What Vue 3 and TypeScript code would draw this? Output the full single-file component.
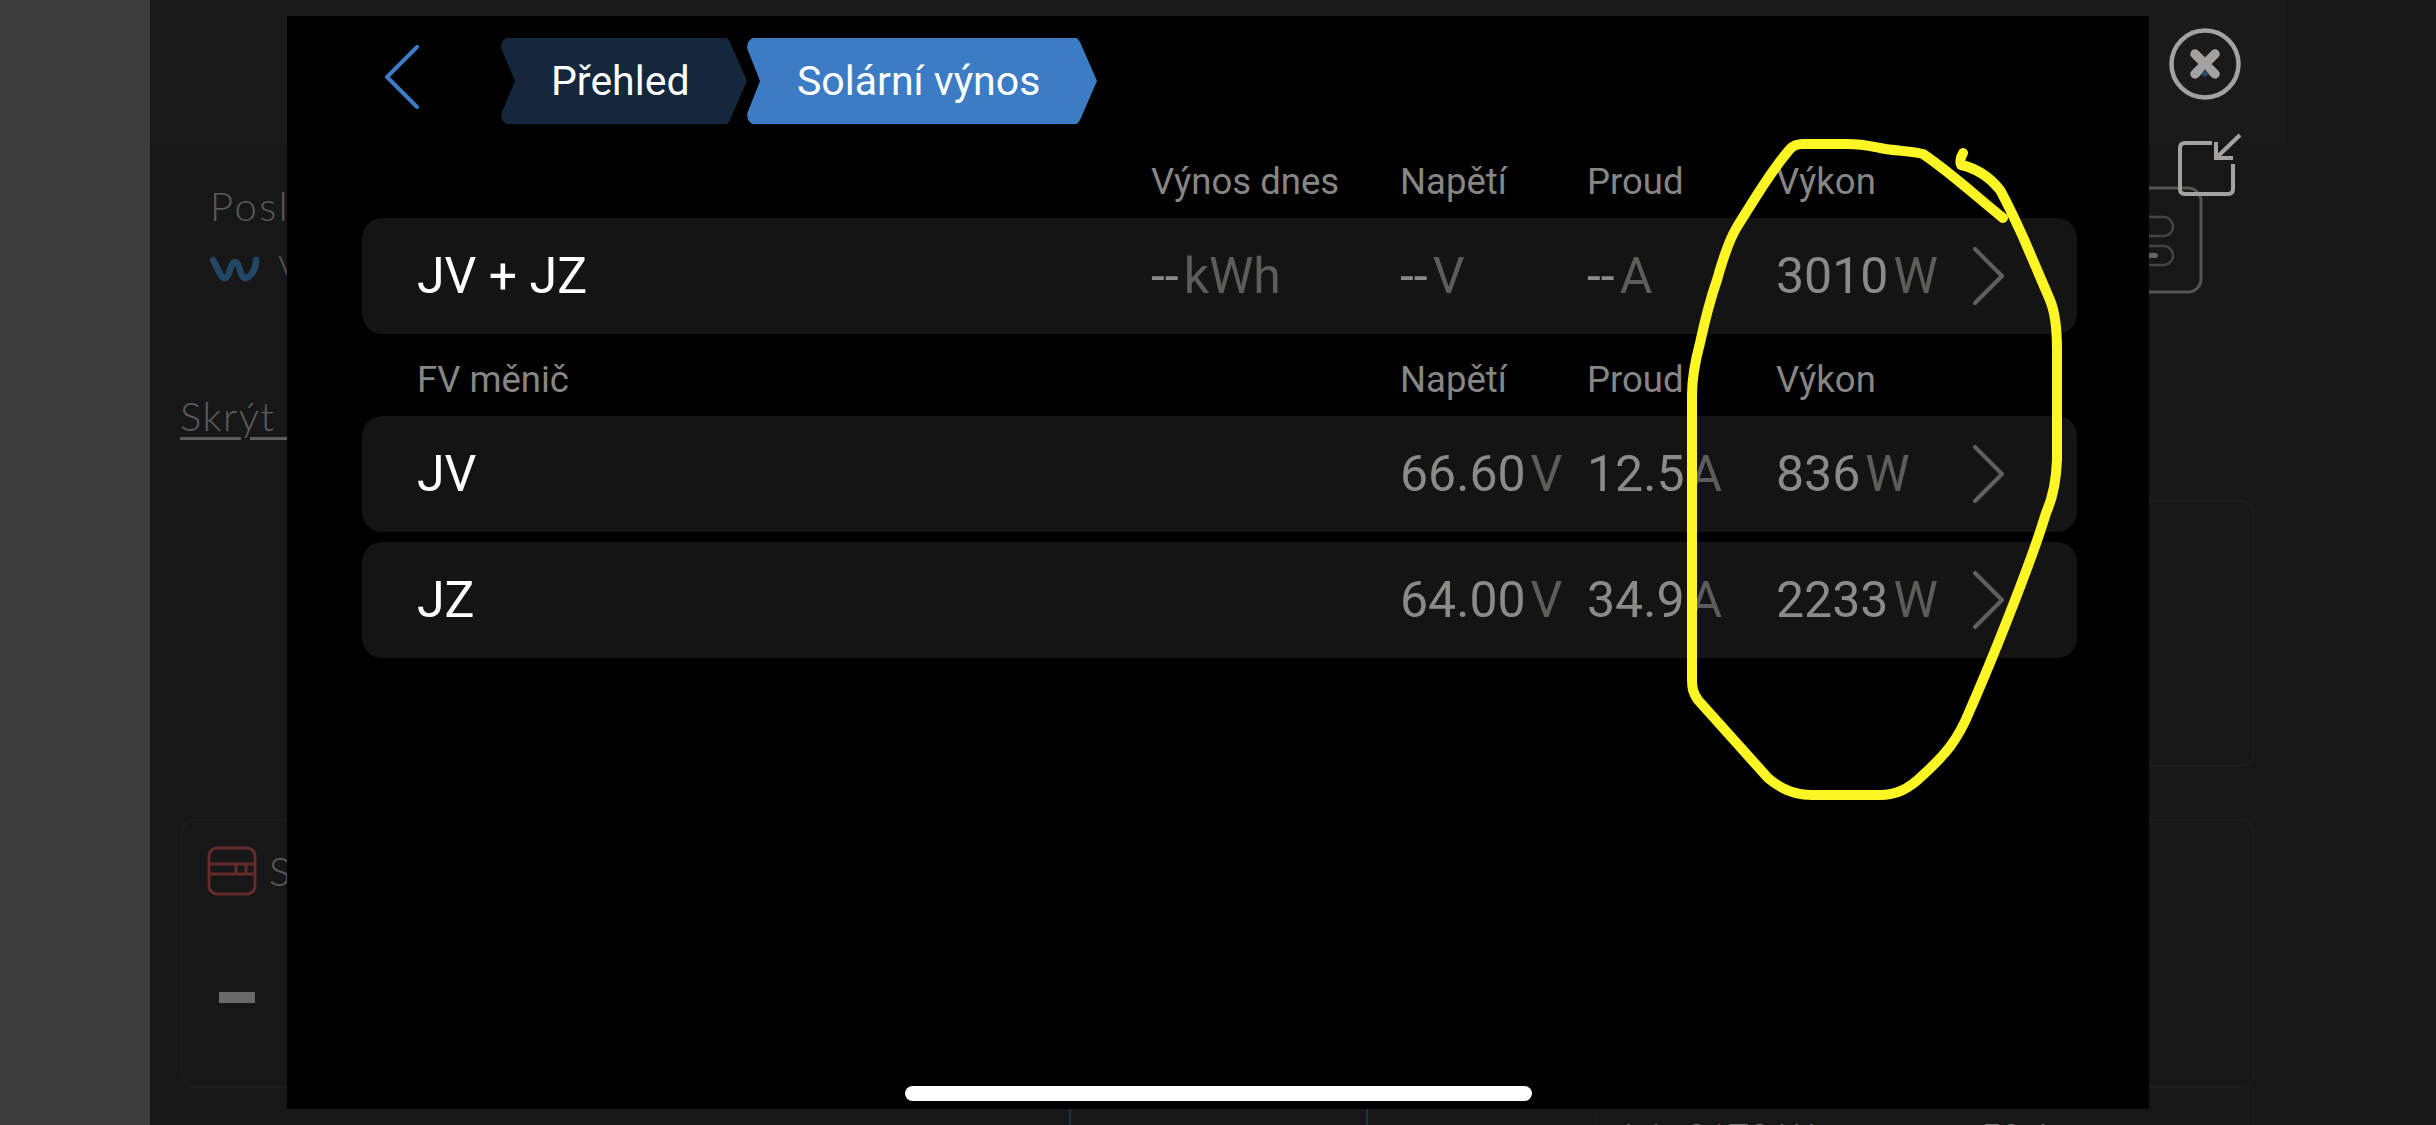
<script setup lang="ts">
interface Row {
  name: string
  yieldToday?: string
  voltage: string
  current: string
  power: string
}
const total: Row = { name: 'JV + JZ', yieldToday: '--', voltage: '--', current: '--', power: '3010' }
const chargers: Row[] = [
  { name: 'JV', voltage: '66.60', current: '12.5', power: '836' },
  { name: 'JZ', voltage: '64.00', current: '34.9', power: '2233' },
]
const scribble =
  'M1963 153 C1960 158 1960 162 1961 165 C1975 168 1988 175 2000 190 C2008 204 2016 222 2023 237 ' +
  'L2050 300 C2055 312 2057 325 2057 350 L2057 460 C2056 485 2052 500 2046 513 ' +
  'C2032 560 1992 660 1970 710 C1958 740 1945 755 1923 775 ' +
  'C1908 790 1895 795 1880 795 L1812 795 C1795 795 1782 790 1768 778 L1698 700 C1693 693 1692 688 1692 680 ' +
  'L1692 395 C1692 375 1696 358 1700 343 C1705 320 1710 300 1717 280 C1722 262 1729 240 1737 227 ' +
  'C1755 198 1772 170 1790 149 C1794 145 1797 144 1803 144 L1847 144 C1862 144 1870 146 1880 148 ' +
  'C1895 151 1912 151 1923 154 C1950 172 1978 198 2003 218'
</script>

<template>
  <div class="screen">
    <div class="side"></div>

    <div class="page">
      <div class="band">
        <svg class="close" width="74" height="74" viewBox="0 0 74 74" fill="none">
          <circle cx="37" cy="37" r="33.5" stroke="#a3a2a0" stroke-width="4.5" />
          <path d="M27 27 L47 47 M47 27 L27 47" stroke="#a3a2a0" stroke-width="9.5" stroke-linecap="round" />
          <path d="M33 47 L37 42 L41 47 L37 50 Z" fill="#254a6e" />
        </svg>
        <svg class="shrink" width="64" height="64" viewBox="0 0 64 64" fill="none" stroke="#a3a2a0" stroke-width="4">
          <path d="M34 10 H7 Q2 10 2 15 V56 Q2 61 7 61 H50 Q55 61 55 56 V31" />
          <path d="M62 2 L38 25 M38 9 V25 H55" />
        </svg>
      </div>

      <div class="info">
        <div class="info-text">
          <div class="posl">Posle</div>
          <div class="brand">
            <svg width="50" height="26" viewBox="0 0 50 26" fill="none">
              <path d="M3 4 C8 12 10 22 15 22 C20 22 20 6 25 6 C30 6 30 22 35 22 C40 22 46 14 46 4" stroke="#224766" stroke-width="6.5" stroke-linecap="round" />
            </svg>
            <span class="brand-name">V</span>
          </div>
          <div class="hide-link">Skrýt&nbsp;&nbsp;&nbsp;&nbsp;</div>
        </div>
        <svg class="device" width="122" height="108" viewBox="0 0 122 108" fill="none" stroke="#555553" stroke-width="3">
          <rect x="2" y="2" width="118" height="104" rx="13" />
          <rect x="-30" y="31" width="122" height="19" rx="9.5" stroke="#444443" stroke-width="2.5" />
          <rect x="-30" y="60" width="122" height="19" rx="9.5" stroke="#444443" stroke-width="2.5" />
          <rect x="67" y="67" width="10" height="5" rx="2.5" fill="#666664" stroke="none" />
        </svg>
      </div>

      <div class="card card-top"></div>

      <div class="card card-main">
        <div class="card-head">
          <svg width="50" height="50" viewBox="0 0 50 50" fill="none" stroke="#662b2b" stroke-width="3">
            <rect x="2" y="2" width="46" height="46" rx="8" />
            <path d="M2 18 H48 M2 28 H48 M29 18 V28 M39 18 V28" />
          </svg>
          <span class="card-title">S</span>
        </div>
        <div class="dash"></div>
      </div>

      <div class="foot">
        <div class="foot-lines"></div>
        <div class="foot-panel">
          <span class="foot-label">L1</span>
          <span>3173 W</span>
          <span>50 A</span>
        </div>
      </div>
    </div>

    <div class="modal">
      <div class="nav">
        <svg class="back" width="36" height="64" viewBox="0 0 36 64" fill="none">
          <path d="M33 2 L3 32 L33 62" stroke="#3b7cc5" stroke-width="4" stroke-linecap="round" stroke-linejoin="round" />
        </svg>
        <div class="crumb crumb-dark">Přehled</div>
        <div class="crumb crumb-active">Solární výnos</div>
      </div>

      <div class="cols head head-first">
        <span></span>
        <span>Výnos dnes</span>
        <span>Napětí</span>
        <span>Proud</span>
        <span>Výkon</span>
      </div>
      <div class="cols row">
        <span class="name">{{ total.name }}</span>
        <span class="val"><b>{{ total.yieldToday }}</b><i>kWh</i></span>
        <span class="val"><b>{{ total.voltage }}</b><i>V</i></span>
        <span class="val"><b>{{ total.current }}</b><i>A</i></span>
        <span class="val"><b>{{ total.power }}</b><i>W</i></span>
        <svg width="32" height="58" viewBox="0 0 32 58" fill="none">
          <path d="M2 2 L29 29 L2 56" stroke="#60605e" stroke-width="4" stroke-linecap="round" stroke-linejoin="round" />
        </svg>
      </div>

      <div class="cols head head-second">
        <span>FV měnič</span>
        <span></span>
        <span>Napětí</span>
        <span>Proud</span>
        <span>Výkon</span>
      </div>
      <div class="list">
        <div v-for="c in chargers" :key="c.name" class="cols row">
          <span class="name">{{ c.name }}</span>
          <span></span>
          <span class="val"><b>{{ c.voltage }}</b><i>V</i></span>
          <span class="val"><b>{{ c.current }}</b><i>A</i></span>
          <span class="val"><b>{{ c.power }}</b><i>W</i></span>
          <svg width="32" height="58" viewBox="0 0 32 58" fill="none">
            <path d="M2 2 L29 29 L2 56" stroke="#60605e" stroke-width="4" stroke-linecap="round" stroke-linejoin="round" />
          </svg>
        </div>
      </div>

      <div class="home-bar"></div>
    </div>

    <svg class="scribble" width="2436" height="1125" viewBox="0 0 2436 1125" fill="none">
      <path :d="scribble" stroke="#fdf625" stroke-width="10" stroke-linecap="round" stroke-linejoin="round" />
    </svg>
  </div>
</template>

<style scoped>
.screen {
  position: relative;
  display: flex;
  width: 2436px;
  height: 1125px;
  overflow: hidden;
  background: #171717;
  font-family: Roboto, "Liberation Sans", sans-serif;
}
.side {
  width: 150px;
  flex: none;
  background: #3d3d3d;
}
.page {
  flex: 1;
  min-width: 0;
  font-family: Lato, "Liberation Sans", sans-serif;
  font-weight: 300;
  color: #5a5a5a;
}
.band {
  position: relative;
  box-sizing: border-box;
  height: 144px;
  width: 2136px;
  padding: 27px 44px 0 0;
  display: flex;
  justify-content: flex-end;
  align-items: flex-start;
  background: #1a1a1a;
}
.shrink {
  position: absolute;
  left: 2028px;
  top: 133px;
  z-index: 1;
}
.info {
  box-sizing: border-box;
  height: 356px;
  padding: 39px 233px 0 30px;
  display: flex;
  justify-content: space-between;
  align-items: flex-start;
}
.device {
  margin-top: 3px;
}
.info-text {
  display: flex;
  flex-direction: column;
}
.posl {
  margin-left: 30px;
  font-size: 40px;
  line-height: 46px;
  letter-spacing: 2.5px;
}
.brand {
  margin: 24px 0 0 30px;
  height: 32px;
  display: flex;
  align-items: center;
  gap: 18px;
}
.brand-name {
  font-size: 40px;
  color: #4f4f4f;
}
.hide-link {
  margin-top: 106px;
  font-size: 40px;
  line-height: 50px;
  letter-spacing: 1.5px;
  white-space: pre;
  text-decoration: underline;
  text-decoration-thickness: 3px;
  text-underline-offset: 6px;
  color: #5c5c5c;
}
.card {
  box-sizing: border-box;
  width: 2074px;
  margin-left: 31px;
  border: 2px solid #1c1c1c;
  border-radius: 14px;
}
.card-top {
  width: 1105px;
  margin-left: 1000px;
  height: 267px;
}
.card-main {
  height: 269px;
  margin-top: 52px;
  display: flex;
  flex-direction: column;
}
.card-head {
  display: flex;
  align-items: center;
  gap: 12px;
  margin: 25px 0 0 24px;
}
.card-title {
  font-size: 40px;
  color: #5a5a5a;
}
.dash {
  width: 36px;
  height: 11px;
  margin: 96px 0 0 36px;
  background: #6a6a6a;
}
.foot {
  height: 37px;
  display: flex;
}
.foot-lines {
  width: 1445px;
  flex: none;
  background:
    linear-gradient(#1b3147, #1b3147) 919px 0 / 2px 100% no-repeat,
    linear-gradient(#1b3147, #1b3147) 1216px 0 / 2px 100% no-repeat;
}
.foot-panel {
  box-sizing: border-box;
  width: 660px;
  display: flex;
  gap: 166px;
  padding: 29px 0 0 27px;
  border-left: 2px solid #1a1a1a;
  border-right: 2px solid #1c1c1c;
  font-family: Roboto, sans-serif;
  font-size: 38px;
  line-height: 44px;
  color: #777;
}
.foot-label {
  width: 33px;
  margin-right: -137px;
}

.modal {
  position: absolute;
  left: 287px;
  top: 16px;
  box-sizing: border-box;
  width: 1862px;
  height: 1093px;
  padding: 22px 72px 0 75px;
  background: #000;
  display: flex;
  flex-direction: column;
}
.nav {
  display: flex;
  align-items: center;
  height: 86px;
  margin-left: 22px;
}
.back {
  flex: none;
  margin-right: 81px;
  margin-top: -8px;
}
.crumb {
  display: flex;
  align-items: center;
  box-sizing: border-box;
  height: 86px;
  font-size: 41px;
  color: #fff;
}
.crumb-dark {
  width: 246px;
  padding-left: 50px;
  background: #14273d;
  clip-path: polygon(5px 0, 226px 0, 229px 4px, 246px 43px, 229px 82px, 226px 86px, 5px 86px, 1px 82px, 0 76px, 14px 43px, 0 10px, 1px 4px);
}
.crumb-active {
  width: 350px;
  padding-left: 50px;
  background: #3b7cc5;
  clip-path: polygon(5px 0, 330px 0, 333px 4px, 350px 43px, 333px 82px, 330px 86px, 5px 86px, 1px 82px, 0 76px, 13px 43px, 0 10px, 1px 4px);
}
.cols {
  display: grid;
  grid-template-columns: 734px 249px 187px 189px 197px 32px;
  align-items: center;
  padding-left: 55px;
}
.head {
  font-size: 36.5px;
  line-height: 44px;
  color: #868684;
}
.head-first {
  box-sizing: border-box;
  margin-top: 34px;
  height: 60px;
  padding-bottom: 12px;
}
.head-second {
  box-sizing: border-box;
  height: 82px;
  padding-top: 10px;
}
.row {
  height: 116px;
  border-radius: 20px;
  background: #141414;
}
.list {
  display: flex;
  flex-direction: column;
  gap: 10px;
}
.name {
  font-size: 50px;
  color: #fff;
}
.val {
  display: flex;
  align-items: baseline;
  font-size: 50px;
  font-weight: 400;
  white-space: nowrap;
}
.val b {
  font-weight: 400;
  color: #8a8a88;
}
.val i {
  margin-left: 5px;
  font-style: normal;
  color: #5c5c5a;
}
.home-bar {
  align-self: center;
  width: 627px;
  height: 15px;
  margin: auto 3px 8px 0;
  border-radius: 8px;
  background: #fff;
}
.scribble {
  position: absolute;
  left: 0;
  top: 0;
  pointer-events: none;
}
</style>

<style>
html,
body {
  margin: 0;
  background: #171717;
}
</style>
